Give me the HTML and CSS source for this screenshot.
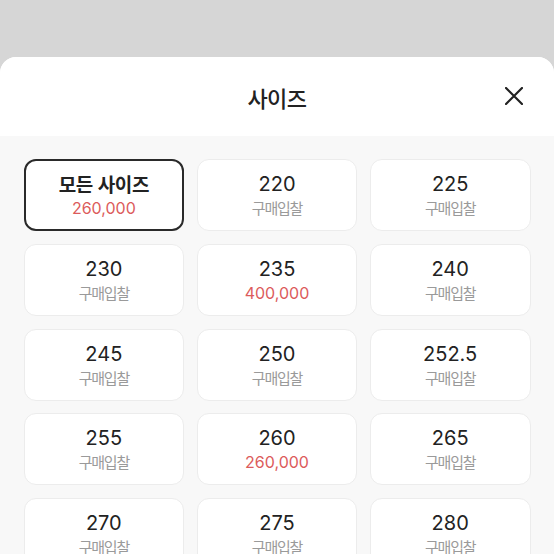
FILE: index.html
```html
<!DOCTYPE html>
<html lang="ko">
<head>
    <meta charset="UTF-8">
    <meta name="viewport" content="width=device-width, initial-scale=1.0">
    <title>사이즈</title>
    <link rel="stylesheet" href="styles.css">
</head>
<body>

    <div class="sheet">
        <!-- Header -->
        <div class="sheet-header">
            <h1 class="sheet-title">사이즈</h1>
            <button class="close-btn" aria-label="닫기">
                <svg width="18" height="18" viewBox="0 0 18 18">
                    <path d="M1 1L17 17M17 1L1 17" stroke="#222" stroke-width="2.2" stroke-linecap="round"/>
                </svg>
            </button>
        </div>

        <!-- Size grid -->
        <div class="size-grid">
            <div class="size-card selected">
                <div class="size-all">모든 사이즈</div>
                <div class="size-price">260,000</div>
            </div>
            <div class="size-card">
                <div class="size-label">220</div>
                <div class="size-bid">구매입찰</div>
            </div>
            <div class="size-card">
                <div class="size-label">225</div>
                <div class="size-bid">구매입찰</div>
            </div>
            <div class="size-card">
                <div class="size-label">230</div>
                <div class="size-bid">구매입찰</div>
            </div>
            <div class="size-card">
                <div class="size-label">235</div>
                <div class="size-price">400,000</div>
            </div>
            <div class="size-card">
                <div class="size-label">240</div>
                <div class="size-bid">구매입찰</div>
            </div>
            <div class="size-card">
                <div class="size-label">245</div>
                <div class="size-bid">구매입찰</div>
            </div>
            <div class="size-card">
                <div class="size-label">250</div>
                <div class="size-bid">구매입찰</div>
            </div>
            <div class="size-card">
                <div class="size-label">252.5</div>
                <div class="size-bid">구매입찰</div>
            </div>
            <div class="size-card">
                <div class="size-label">255</div>
                <div class="size-bid">구매입찰</div>
            </div>
            <div class="size-card">
                <div class="size-label">260</div>
                <div class="size-price">260,000</div>
            </div>
            <div class="size-card">
                <div class="size-label">265</div>
                <div class="size-bid">구매입찰</div>
            </div>
            <div class="size-card">
                <div class="size-label">270</div>
                <div class="size-bid">구매입찰</div>
            </div>
            <div class="size-card">
                <div class="size-label">275</div>
                <div class="size-bid">구매입찰</div>
            </div>
            <div class="size-card">
                <div class="size-label">280</div>
                <div class="size-bid">구매입찰</div>
            </div>
        </div>
    </div>

</body>
</html>
```

FILE: styles.css
```css
html, body {
    height: 100%;
}
body {
    margin: 0;
    background-color: #d6d6d6;
    font-family: "Inter", "Noto Sans CJK KR", sans-serif;
    overflow: hidden;
}
.sheet {
    margin-top: 57px;
    background-color: #f8f8f8;
    border-radius: 16px 16px 0 0;
    overflow: hidden;
    min-height: 600px;
}
.sheet-header {
    height: 79px;
    background-color: white;
    display: flex;
    align-items: center;
    justify-content: center;
    position: relative;
}
.sheet-title {
    margin: 0;
    font-family: "Noto Sans CJK KR", sans-serif;
    font-size: 22px;
    font-weight: 500;
    letter-spacing: -0.5px;
    color: #222;
}
.close-btn {
    position: absolute;
    right: 31px;
    top: 30px;
    width: 18px;
    height: 18px;
    padding: 0;
    border: none;
    background: none;
    display: flex;
}
.size-grid {
    display: grid;
    grid-template-columns: repeat(3, 1fr);
    column-gap: 12.5px;
    row-gap: 12.75px;
    padding: 23px 23.5px;
}
.size-card {
    height: 72px;
    box-sizing: border-box;
    background-color: white;
    border: 1px solid #ececec;
    border-radius: 12px;
    display: flex;
    flex-direction: column;
    align-items: center;
    justify-content: center;
    gap: 2px;
}
.size-card.selected {
    border: 2px solid #2a2a2a;
}
.size-label {
    font-size: 20px;
    line-height: 24px;
    color: #222;
}
.size-all {
    font-family: "Noto Sans CJK KR", sans-serif;
    font-size: 19px;
    font-weight: 700;
    line-height: 24px;
    letter-spacing: -0.4px;
    color: #222;
}
.size-bid {
    font-family: "Noto Sans CJK KR", sans-serif;
    font-size: 15px;
    line-height: 20px;
    letter-spacing: -1.2px;
    color: #9a9a9a;
}
.size-price {
    font-size: 16px;
    line-height: 20px;
    color: #dc5b5b;
}
```
